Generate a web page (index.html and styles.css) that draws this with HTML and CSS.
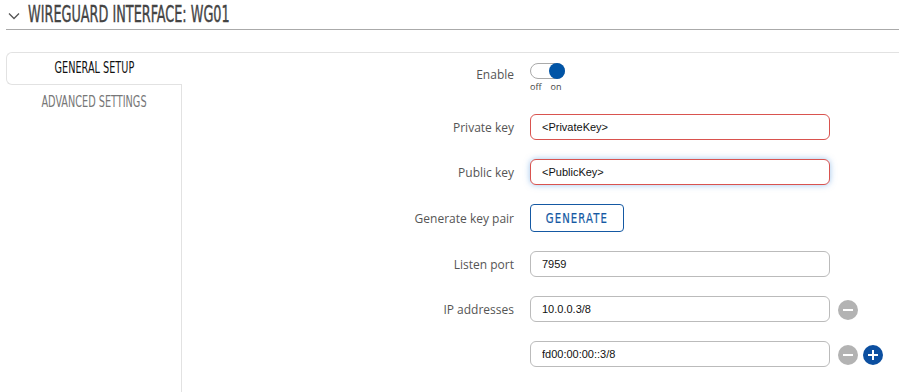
FILE: index.html
```html
<!DOCTYPE html>
<html lang="en">
<head>
  <meta charset="UTF-8" />
  <title>WireGuard Interface: WG01</title>
  <link rel="stylesheet" href="styles.css">
</head>
<body>
  <div class="page">
    <div class="section-head">
      <svg class="chevron" width="12" height="8" viewBox="0 0 12 8">
        <polyline points="1,1.5 6,6.5 11,1.5" fill="none" stroke="#555" stroke-width="1.3" />
      </svg>
      <h1 class="section-title"><span class="narrow">WIREGUARD INTERFACE: WG01</span></h1>
    </div>

    <div class="tabs-wrap">
      <div class="tab-list">
        <div class="tab active"><span class="narrow">GENERAL SETUP</span></div>
        <div class="tab-rest">
          <div class="tab"><span class="narrow">ADVANCED SETTINGS</span></div>
        </div>
      </div>

      <div class="tab-content">
        <div class="form">
          <label class="label label-top">Enable</label>
          <div class="toggle-wrap">
            <div class="toggle"><span class="knob"></span></div>
            <div class="toggle-text"><span>off</span><span>on</span></div>
          </div>
          <div></div>

          <label class="label">Private key</label>
          <input class="field invalid" type="text" value="<PrivateKey>">
          <div></div>

          <label class="label">Public key</label>
          <input class="field invalid focused" type="text" value="<PublicKey>">
          <div></div>

          <label class="label">Generate key pair</label>
          <div><button class="btn-generate"><span class="narrow">GENERATE</span></button></div>
          <div></div>

          <label class="label">Listen port</label>
          <input class="field" type="text" value="7959">
          <div></div>

          <label class="label">IP addresses</label>
          <input class="field" type="text" value="10.0.0.3/8">
          <div class="row-actions">
            <span class="circle-btn minus"></span>
          </div>

          <div></div>
          <input class="field" type="text" value="fd00:00:00::3/8">
          <div class="row-actions">
            <span class="circle-btn minus"></span>
            <span class="circle-btn plus"></span>
          </div>
        </div>
      </div>
    </div>
  </div>
</body>
</html>
```

FILE: styles.css
```css
body, html {
  margin: 0;
  padding: 0;
  background: #fff;
  overflow: hidden;
}

.page {
  padding: 0 4px 0 6px;
}

.narrow {
  display: inline-block;
  white-space: nowrap;
}

.section-head {
  display: flex;
  align-items: center;
  height: 29px;
  border-bottom: 1px solid #aaa;
}

.chevron {
  margin: 2px 8px 0 2px;
}

.section-title {
  margin: 0;
  font-family: "DejaVu Sans Condensed", "DejaVu Sans", sans-serif;
  font-stretch: condensed;
  font-weight: normal;
  font-size: 23px;
  line-height: 29px;
  color: #444;
  -webkit-text-stroke: 0.4px #444;
}

.section-title .narrow {
  transform: scaleX(0.62);
  transform-origin: left center;
}

.tabs-wrap {
  display: flex;
  margin-top: 22px;
  height: 340px;
}

.tab-list {
  width: 176px;
  flex-shrink: 0;
  display: flex;
  flex-direction: column;
}

.tab {
  font-family: "DejaVu Sans Condensed", "DejaVu Sans", sans-serif;
  font-stretch: condensed;
  font-size: 15px;
  text-align: center;
  height: 35px;
  line-height: 35px;
  color: #777;
}

.tab .narrow {
  transform: scaleX(0.72);
  transform-origin: center;
}

.tab.active {
  height: 31px;
  line-height: 31px;
  color: #111;
  border: 1px solid #e2e2e2;
  border-right: none;
  border-radius: 6px 0 0 6px;
}

.tab-rest {
  flex: 1;
  border-right: 1px solid #e2e2e2;
}

.tab-content {
  flex: 1;
  border-top: 1px solid #e2e2e2;
}

.form {
  display: grid;
  grid-template-columns: 332px 300px auto;
  column-gap: 16px;
  row-gap: 19px;
  align-items: center;
  padding-top: 10px;
}

.label {
  font-family: "Open Sans", sans-serif;
  font-size: 12px;
  color: #555;
  text-align: right;
}

.label-top {
  align-self: start;
  line-height: 24px;
}

.toggle-wrap {
  height: 32px;
}

.toggle {
  position: relative;
  width: 33px;
  height: 14px;
  border: 1px solid #aaa;
  border-radius: 9px;
  background: #fff;
}

.knob {
  position: absolute;
  right: -1px;
  top: -1px;
  width: 16px;
  height: 16px;
  border-radius: 50%;
  background: #0054a6;
}

.toggle-text {
  display: flex;
  gap: 9px;
  margin-top: 3px;
  font-family: "Open Sans", sans-serif;
  font-size: 9px;
  line-height: 10px;
  color: #444;
}

.field {
  box-sizing: border-box;
  width: 300px;
  height: 26px;
  margin: 0;
  padding: 0 11px;
  border: 1px solid #bbb;
  border-radius: 6px;
  font-family: "Liberation Sans", Arial, sans-serif;
  font-size: 11px;
  color: #111;
  outline: none;
}

.field.invalid {
  border-color: #d9534f;
}

.field.focused {
  box-shadow: 0 0 6px rgba(80, 150, 220, 0.55);
}

.btn-generate {
  box-sizing: border-box;
  width: 94px;
  height: 28px;
  padding: 0;
  background: #fff;
  border: 1.5px solid #1559a3;
  border-radius: 4px;
  color: #1559a3;
  font-family: "DejaVu Sans Condensed", "DejaVu Sans", sans-serif;
  font-stretch: condensed;
  font-size: 14px;
  letter-spacing: 1.4px;
}

.btn-generate .narrow {
  transform: scaleX(0.8);
  transform-origin: center;
  -webkit-text-stroke: 0.2px #1559a3;
}

.row-actions {
  display: flex;
  gap: 5px;
  margin-left: -8px;
  padding-top: 1px;
}

.circle-btn {
  position: relative;
  width: 20px;
  height: 20px;
  border-radius: 50%;
  background: #b3b3b3;
}

.circle-btn::before,
.circle-btn.plus::after {
  content: '';
  position: absolute;
  left: 5px;
  top: 9px;
  width: 10px;
  height: 2px;
  background: #fff;
}

.circle-btn.plus {
  background: #0c4fa0;
}

.circle-btn.plus::after {
  left: 9px;
  top: 5px;
  width: 2px;
  height: 10px;
}
```
